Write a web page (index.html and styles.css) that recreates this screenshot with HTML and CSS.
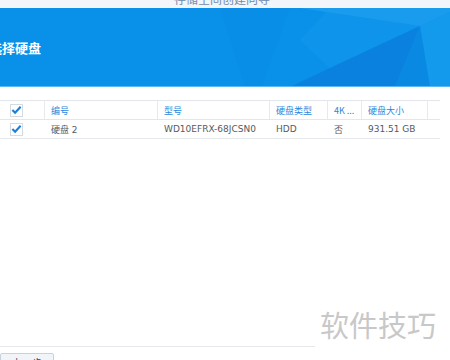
FILE: index.html
```html
<!DOCTYPE html>
<html>
<head>
<meta charset="utf-8">
<link rel="stylesheet" href="styles.css">
</head>
<body>
<div class="page">
  <div class="topbar"><span class="wiz-title">存储空间创建向导</span></div>
  <div class="hero">
    <svg class="facets" width="450" height="79" viewBox="0 8 450 79" preserveAspectRatio="none">
      <polygon points="220,8 290,8 262,87 245,87" fill="#0a7fd8" opacity="0.12"/>
      <polygon points="300,8 450,8 450,12 420,26" fill="#2aa8f2" opacity="0.5"/>
      <polygon points="330,8 420,26 330,68 300,40" fill="#1b9cee" opacity="0.3"/>
      <polygon points="330,68 420,26 395,87 290,87" fill="#0a7ad8" opacity="0.65"/>
      <polygon points="420,26 450,12 450,87 430,87" fill="#1aa0ef" opacity="0.6"/>
      <polygon points="420,26 430,87 395,87" fill="#0c86df" opacity="0.7"/>
    </svg>
    <h1 class="hero-title">选择硬盘</h1>
  </div>
  <div class="content">
    <div class="table">
      <div class="row head">
        <div class="cell chk"><span class="box"><svg width="12" height="10" viewBox="0 0 12 10"><path d="M1.5 5 L4.5 8 L10.5 1.5" fill="none" stroke="#1a7fd6" stroke-width="2.3"/></svg></span></div>
        <div class="cell">编号</div>
        <div class="cell">型号</div>
        <div class="cell">硬盘类型</div>
        <div class="cell">4K ...</div>
        <div class="cell">硬盘大小</div>
        <div class="cell last"></div>
      </div>
      <div class="row body">
        <div class="cell chk"><span class="box"><svg width="12" height="10" viewBox="0 0 12 10"><path d="M1.5 5 L4.5 8 L10.5 1.5" fill="none" stroke="#1a7fd6" stroke-width="2.3"/></svg></span></div>
        <div class="cell">硬盘 2</div>
        <div class="cell">WD10EFRX-68JCSN0</div>
        <div class="cell">HDD</div>
        <div class="cell">否</div>
        <div class="cell">931.51 GB</div>
        <div class="cell last"></div>
      </div>
    </div>
  </div>
  <div class="footer">
    <button class="btn">上一步</button>
  </div>
  <div class="watermark">软件技巧</div>
</div>
</body>
</html>
```

FILE: styles.css
```css
html, body {
  margin: 0;
  padding: 0;
  width: 450px;
  height: 360px;
  overflow: hidden;
  background: #ffffff;
}
.page {
  position: relative;
  width: 450px;
  height: 360px;
  display: flex;
  flex-direction: column;
  font-family: "DejaVu Sans", "Noto Sans CJK SC", sans-serif;
}
.topbar {
  height: 8px;
  background: #f2f5f9;
  position: relative;
  overflow: hidden;
  display: flex;
  justify-content: center;
}
.wiz-title {
  margin-top: -8px;
  font-family: "Noto Sans CJK SC", sans-serif;
  font-size: 12px;
  line-height: 14px;
  font-weight: normal;
  color: #6f8cae;
  margin-left: -6px;
}
.hero {
  position: relative;
  height: 78px;
  background: #0991e9;
  border-bottom: 1px solid #5bb8f2;
  overflow: hidden;
  display: flex;
  align-items: center;
}
.facets {
  position: absolute;
  left: 0;
  top: 0;
}
.hero-title {
  position: relative;
  margin: 0 0 0 -11px;
  font-family: "Noto Sans CJK SC", sans-serif;
  font-size: 13px;
  font-weight: bold;
  color: #ffffff;
}
.content {
  flex: 1;
  padding-top: 13px;
}
.table {
  width: 440px;
}
.row {
  display: grid;
  grid-template-columns: 45px 113px 112px 58px 34px 66px 12px;
  font-size: 9px;
}
.row.head {
  height: 18px;
  border-top: 1px solid #e3e7ec;
  border-bottom: 1px solid #e3e7ec;
  color: #2b88dc;
  font-family: "Noto Sans CJK SC", "DejaVu Sans", sans-serif;
}
.row.head .cell {
  border-right: 1px solid #e6e9ee;
}
.row.head .cell.last {
  border-right: none;
}
.row.body {
  height: 18px;
  border-bottom: 1px solid #e6e9ee;
  color: #555a60;
}
.cell {
  display: flex;
  align-items: center;
  padding-left: 6px;
  white-space: nowrap;
  overflow: hidden;
}
.cell.chk {
  padding-left: 10px;
}
.box {
  width: 13px;
  height: 13px;
  box-sizing: border-box;
  border: 1px solid #d5dbe2;
  background: #fff;
  display: flex;
  align-items: center;
  justify-content: center;
}
.footer {
  height: 14px;
  border-top: 1px solid #e4e7eb;
  padding-top: 6px;
  box-sizing: border-box;
}
.btn {
  display: block;
  width: 54px;
  height: 20px;
  margin: 0;
  padding: 0;
  border: 1px solid #c9d2dc;
  border-radius: 2px;
  background: #f1f5f9;
  font-family: "Noto Sans CJK SC", sans-serif;
  font-size: 10px;
  color: #445;
  line-height: 18px;
}
.watermark {
  position: absolute;
  left: 315px;
  top: 302px;
  width: 135px;
  height: 58px;
  background: #ffffff;
  font-family: "Noto Sans CJK SC", sans-serif;
  font-size: 29px;
  color: #c8c8c8;
  line-height: 44px;
  padding-left: 5px;
  box-sizing: border-box;
}
```
